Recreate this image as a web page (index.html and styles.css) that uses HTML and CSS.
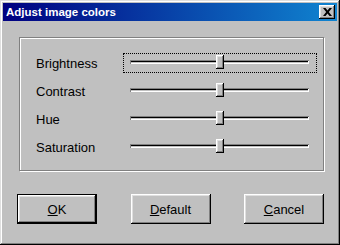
FILE: index.html
```html
<!DOCTYPE html>
<html lang="en">
<head>
  <meta charset="UTF-8" />
  <title>Adjust image colors</title>
  <link rel="stylesheet" href="styles.css">
</head>
<body>
  <div class="window">
    <div class="titlebar">
      <span class="title">Adjust image colors</span>
      <button type="button" class="btn-cerrar">
        <svg width="9" height="8" viewBox="0 0 9 8"><path d="M0 0h2.5l2 2.5 2-2.5H9L5.8 4 9 8H6.5l-2-2.5-2 2.5H0l3.2-4z" fill="#000"/></svg>
      </button>
    </div>

    <fieldset class="grupo">
      <div class="fila">
        <label>Brightness</label>
        <div class="slider foco"><div class="pista"></div><div class="pulgar"></div></div>
      </div>
      <div class="fila">
        <label>Contrast</label>
        <div class="slider"><div class="pista"></div><div class="pulgar"></div></div>
      </div>
      <div class="fila">
        <label>Hue</label>
        <div class="slider"><div class="pista"></div><div class="pulgar"></div></div>
      </div>
      <div class="fila">
        <label>Saturation</label>
        <div class="slider"><div class="pista"></div><div class="pulgar"></div></div>
      </div>
    </fieldset>

    <div class="botones">
      <button type="button" class="btn btn-default"><span class="u">O</span>K</button>
      <button type="button" class="btn"><span class="u">D</span>efault</button>
      <button type="button" class="btn"><span class="u">C</span>ancel</button>
    </div>
  </div>
</body>
</html>
```

FILE: styles.css
```css
body {
  margin: 0;
  font-family: "Liberation Sans", Arial, sans-serif;
  font-size: 13px;
  color: #000;
}
.window {
  width: 340px;
  height: 245px;
  box-sizing: border-box;
  padding: 3px;
  background: #c0c0c0;
  box-shadow: inset -1px -1px #000, inset 1px 1px #dfdfdf,
              inset -2px -2px #808080, inset 2px 2px #fff;
}
.titlebar {
  height: 18px;
  display: flex;
  align-items: center;
  justify-content: space-between;
  background: linear-gradient(90deg, #000080, #1084d0);
  padding: 0 2px 0 3px;
}
.title {
  color: #fff;
  font-weight: bold;
  font-size: 11.5px;
}
.btn-cerrar {
  width: 16px;
  height: 14px;
  padding: 0;
  border: none;
  background: #c0c0c0;
  display: flex;
  align-items: center;
  justify-content: center;
  box-shadow: inset -1px -1px #000, inset 1px 1px #fff,
              inset -2px -2px #808080, inset 2px 2px #dfdfdf;
}
.grupo {
  margin: 16px 14px 0 16px;
  height: 134px;
  box-sizing: border-box;
  padding: 15px 6px 0 15px;
  border: 1px solid #808080;
  box-shadow: 1px 1px #fff, inset 1px 1px #fff;
  display: flex;
  flex-direction: column;
  gap: 8px;
}
.fila {
  display: grid;
  grid-template-columns: 88px 194px;
  align-items: center;
  height: 20px;
}
label {
  padding-left: 1px;
}
.slider {
  height: 20px;
  box-sizing: border-box;
  position: relative;
  display: flex;
  align-items: center;
  padding: 0 7px 0 6px;
  border: 1px dotted transparent;
}
.slider.foco {
  border-color: #000;
  margin-top: -1px;
}
.pista {
  flex: 1;
  height: 4px;
  box-sizing: border-box;
  margin-top: -2px;
  background: #c0c0c0;
  box-shadow: inset 1px 1px #808080, inset -1px -1px #fff, inset 0 2px #000;
}
.pulgar {
  position: absolute;
  left: 92px;
  top: 1px;
  width: 8px;
  height: 14px;
  background: #c0c0c0;
  box-shadow: inset -1px -1px #000, inset 1px 1px #fff,
              inset -2px -2px #808080, inset 2px 2px #dfdfdf;
}
.botones {
  display: flex;
  justify-content: space-between;
  padding: 0 13px 0 14px;
  margin-top: 23px;
}
.btn {
  width: 80px;
  height: 30px;
  padding: 0;
  border: none;
  background: #c0c0c0;
  font-family: "Liberation Sans", Arial, sans-serif;
  font-size: 13px;
  color: #000;
  box-shadow: inset -1px -1px #000, inset 1px 1px #fff,
              inset -2px -2px #808080, inset 2px 2px #dfdfdf;
}
.btn-default {
  box-shadow: inset 0 0 0 1px #000, inset -2px -2px #000, inset 2px 2px #fff,
              inset -3px -3px #808080, inset 3px 3px #dfdfdf;
}
.u {
  text-decoration: underline;
}
```
